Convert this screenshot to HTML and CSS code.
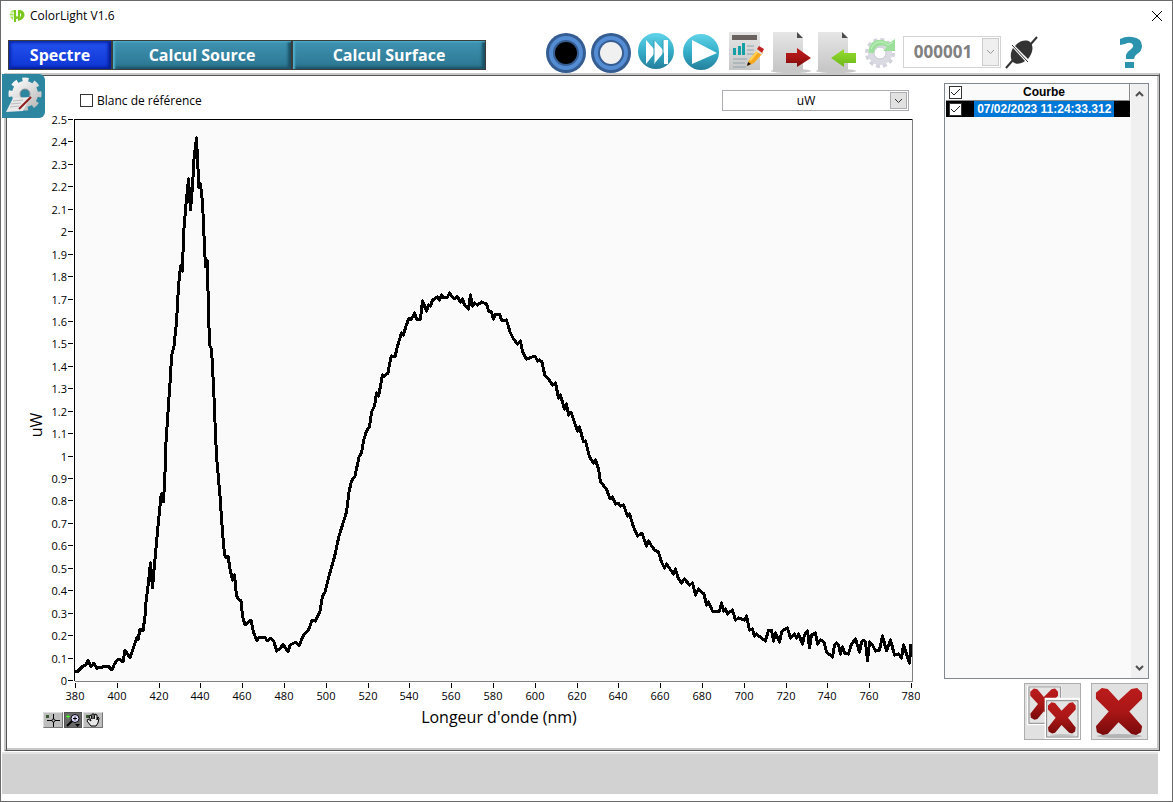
FILE: index.html
```html
<!DOCTYPE html>
<html lang="fr">
<head>
    <meta charset="UTF-8">
    <meta name="viewport" content="width=device-width, initial-scale=1.0">
    <title>ColorLight V1.6</title>
    <link rel="stylesheet" href="styles.css">
</head>
<body>
    <!-- shared gradients -->
    <svg class="defs" width="0" height="0" aria-hidden="true">
        <defs>
            <linearGradient id="teal" x1="0" y1="0" x2="0" y2="1"><stop offset="0" stop-color="#5fd3e8"/><stop offset="0.5" stop-color="#36aec9"/><stop offset="1" stop-color="#237f9b"/></linearGradient>
            <linearGradient id="sheet" x1="0" y1="0" x2="0" y2="1"><stop offset="0" stop-color="#e6e6e6"/><stop offset="1" stop-color="#c6c6c6"/></linearGradient>
            <linearGradient id="red" x1="0" y1="0" x2="0" y2="1"><stop offset="0" stop-color="#bb1c1c"/><stop offset="0.5" stop-color="#aa1616"/><stop offset="1" stop-color="#780a0a"/></linearGradient>
            <linearGradient id="green" x1="0" y1="0" x2="0" y2="1"><stop offset="0" stop-color="#96dc2c"/><stop offset="1" stop-color="#6cb81c"/></linearGradient>
            <linearGradient id="steel" gradientUnits="userSpaceOnUse" x1="12" y1="4" x2="36" y2="36"><stop offset="0" stop-color="#ffffff"/><stop offset="1" stop-color="#b4b4b4"/></linearGradient>
            <path id="cross" d="M4 9 10 4 16 5 27 17 40 5 46 4 51 9 51 15 38 28 51 43 50 49 45 52 40 51 27 39 16 51 11 52 5 49 4 43 17 28 4 15Z"/>
        </defs>
    </svg>

    <div class="window">
        <header class="titlebar">
            <svg class="logo" width="16" height="16" viewBox="0 0 16 16">
                <path d="M5 2C0 3-1 8 4 12Z" fill="#a5e15c"/>
                <path d="M10 2C17 2 18 11 9 13V10C13 9 13 5 10 5Z" fill="#7ac81e"/>
                <path d="M5 2H7V8Q8 9 9 8V2H11V9Q10 11 7 11V14H5Z" fill="#7ac81e"/>
                <path d="M1 5H5M0 8H4" stroke="#fff"/>
            </svg>
            <h1>ColorLight V1.6</h1>
            <button class="close" type="button" aria-label="Fermer">
                <svg width="12" height="12" viewBox="0 0 12 12"><path d="M1 1 11 11M11 1 1 11" stroke="#000" fill="none"/></svg>
            </button>
        </header>

        <div class="toolbar">
            <nav class="tabs">
                <button class="tab tab-spectre active" type="button">Spectre</button>
                <button class="tab tab-source" type="button">Calcul Source</button>
                <button class="tab tab-surface" type="button">Calcul Surface</button>
            </nav>

            <div class="tools">
                <button class="tool" type="button" aria-label="Noir">
                    <svg viewBox="0 0 41 41"><circle cx="20" cy="21" r="20" fill="#355d91"/><circle cx="20" cy="21" r="15" fill="none" stroke="#548dd4" stroke-width="4"/><circle cx="20" cy="21" r="11" fill="#000"/></svg>
                </button>
                <button class="tool" type="button" aria-label="Blanc">
                    <svg viewBox="0 0 41 41"><circle cx="20" cy="21" r="20" fill="#355d91"/><circle cx="20" cy="21" r="15" fill="none" stroke="#548dd4" stroke-width="4"/><circle cx="20" cy="21" r="11" fill="#f0f0f0"/></svg>
                </button>
                <button class="tool" type="button" aria-label="Mesure continue">
                    <svg viewBox="0 0 41 41"><circle cx="20" cy="19" r="18" fill="url(#teal)"/><path d="M10 8 18 17V8L27 18V8H32V32H28V20L18 32V22L10 32Z" fill="#fff"/><path d="M18 8V31M27 8V31" stroke="#2c9ab5"/></svg>
                </button>
                <button class="tool" type="button" aria-label="Mesure">
                    <svg viewBox="0 0 41 41"><circle cx="20" cy="20" r="18" fill="url(#teal)"/><path d="M11 8 36 21 11 32Z" fill="#fff"/></svg>
                </button>
                <button class="tool" type="button" aria-label="Rapport">
                    <svg viewBox="0 0 41 41">
                        <rect x="3" y="0" width="31" height="38" fill="url(#sheet)"/>
                        <rect x="6" y="3" width="25" height="5" fill="#6a625e"/>
                        <path d="M7 16h3v7H7zM12 14h3v9h-3zM16 11h3v12h-3z" fill="#14a0a5"/>
                        <path d="M21 14h7M21 18h7M21 22h7M7 27h14M7 31h12M7 35h13" stroke="#8fa2ac"/>
                        <path d="M21 34 23 28 32 17 37 21 28 31Z" fill="#f5a81c"/>
                        <path d="M23 28 32 17 34 18 25 29Z" fill="#ffd15a"/>
                        <path d="M31 17 33 14 38 17 36 21Z" fill="#c22424"/>
                        <path d="M30 18 36 22" stroke="#ddd" stroke-width="2"/>
                        <path d="M21 34 22 30 25 32Z" fill="#111"/>
                    </svg>
                </button>
                <button class="tool" type="button" aria-label="Exporter">
                    <svg viewBox="0 0 41 41">
                        <ellipse cx="20" cy="39" rx="20" ry="2" fill="#c8c8c8"/>
                        <path d="M2 0H26L32 6V38H2Z" fill="url(#sheet)"/><path d="M26 0H32V6Z" fill="#fff"/><path d="M26 0 32 6H26Z" fill="#4c4c4c"/>
                        <path d="M15 21H26V16L40 26 26 35V31H15Z" fill="url(#red)"/>
                    </svg>
                </button>
                <button class="tool" type="button" aria-label="Importer">
                    <svg viewBox="0 0 41 41">
                        <ellipse cx="20" cy="39" rx="20" ry="2" fill="#c8c8c8"/>
                        <path d="M2 0H26L32 6V38H2Z" fill="url(#sheet)"/><path d="M26 0H32V6Z" fill="#fff"/><path d="M26 0 32 6H26Z" fill="#4c4c4c"/>
                        <path d="M40 21H28V17L15 26 28 35V31H40Z" fill="url(#green)"/>
                    </svg>
                </button>
                <button class="tool" type="button" aria-label="Actualiser">
                    <svg viewBox="0 0 41 41">
                        <circle cx="19" cy="21" r="13" fill="none" stroke="#d2d2dc" stroke-width="4" stroke-dasharray="3.8 3"/>
                        <circle cx="19" cy="21" r="9" fill="none" stroke="#dadae2" stroke-width="6"/>
                        <circle cx="19" cy="21" r="6" fill="#fff" stroke="#c5c5d0"/>
                        <path d="M8 21C6 11 17 3 28 11L34 7V19H22L26 15C19 11 13 15 13 21Z" fill="#9de09b"/>
                        <path d="M10 17C13 9 21 8 27 13L32 10" stroke="#c9f2c8" fill="none"/>
                    </svg>
                </button>
            </div>

            <div class="dropdown serial">
                <select aria-label="Numéro de série" disabled><option>000001</option></select>
                <span class="arrow"><svg width="9" height="6" viewBox="0 0 9 6"><path d="M1 1 4.5 4.5 8 1" fill="none" stroke="currentColor"/></svg></span>
            </div>

            <button class="tool plug" type="button" aria-label="Connexion">
                <svg viewBox="0 0 34 41">
                    <path d="M1 36 8 28M25 13 32 5" stroke="#333" stroke-width="2"/>
                    <path d="M8 16 20 29C16 32 11 33 8 30 5 27 5 21 8 16Z" fill="#333"/>
                    <path d="M10 14C14 9 21 7 25 10 29 14 28 21 23 27Z" fill="#333"/>
                    <path d="M7 13 23 30" stroke="#333"/>
                </svg>
            </button>

            <button class="tool help" type="button" aria-label="Aide">
                <svg viewBox="0 0 24 41"><path d="M1 7Q7 4 13 5 23 6 23 14 23 19 18 22 15 24 15 27H7Q6 21 11 18 15 15 14 13 12 9 6 12L1 13Z" fill="#2c93ae"/><rect x="6" y="30" width="9" height="6" fill="#2c93ae"/></svg>
            </button>
        </div>

        <main class="panel">
            <button class="settings" type="button" aria-label="Réglages">
                <svg width="43" height="44" viewBox="0 0 43 44">
                    <circle cx="23" cy="20" r="14" fill="none" stroke="url(#steel)" stroke-width="5" stroke-dasharray="6 5" stroke-dashoffset="3"/>
                    <circle cx="23" cy="20" r="9" fill="none" stroke="url(#steel)" stroke-width="8"/>
                    <circle cx="23" cy="20" r="5" fill="#2c86a0" stroke="#999"/>
                    <path d="M11 24 28 23 21 37 4 38 7 32Z" fill="#e9e9ea"/>
                    <path d="M11 27 21 26M9 30 19 29M8 33 17 32" stroke="#bbb"/>
                    <path d="M17 35 29 23" stroke="#8c1a1a" stroke-width="2"/>
                </svg>
            </button>

            <section class="spectrum">
                <div class="options">
                    <label class="check"><input type="checkbox"> Blanc de référence</label>
                    <div class="dropdown unit">
                        <select aria-label="Unité"><option>uW</option></select>
                        <span class="arrow"><svg width="9" height="6" viewBox="0 0 9 6"><path d="M1 1 4.5 4.5 8 1" fill="none" stroke="currentColor"/></svg></span>
                    </div>
                </div>

                <svg class="chart" viewBox="20 112 900 594" role="img" aria-label="Spectre en uW">
                    <rect x="75" y="120" width="837" height="562" fill="#fafafa"/>
                    <g class="axis">
                        <path d="M912.5 120V682.5H75" stroke="#808080"/>
                        <path d="M74.5 682V120.5H912" stroke="#000"/>
                        <path d="M68 120.5h5M68 142.5h5M68 165.5h5M68 187.5h5M68 210.5h5M68 232.5h5M68 255.5h5M68 277.5h5M68 300.5h5M68 322.5h5M68 344.5h5M68 367.5h5M68 389.5h5M68 412.5h5M68 434.5h5M68 457.5h5M68 479.5h5M68 501.5h5M68 524.5h5M68 546.5h5M68 569.5h5M68 591.5h5M68 614.5h5M68 636.5h5M68 659.5h5M68 681.5h5" stroke="#000"/>
                        <path d="M75.5 684v5M117.5 684v5M159.5 684v5M200.5 684v5M242.5 684v5M284.5 684v5M326.5 684v5M368.5 684v5M409.5 684v5M451.5 684v5M493.5 684v5M535.5 684v5M577.5 684v5M618.5 684v5M660.5 684v5M702.5 684v5M744.5 684v5M786.5 684v5M827.5 684v5M869.5 684v5M911.5 684v5" stroke="#000"/>
                    </g>
                    <g class="labels-y">
                        <text x="67" y="125">2.5</text>
                        <text x="67" y="147">2.4</text>
                        <text x="67" y="170">2.3</text>
                        <text x="67" y="192">2.2</text>
                        <text x="67" y="215">2.1</text>
                        <text x="67" y="237">2</text>
                        <text x="67" y="260">1.9</text>
                        <text x="67" y="282">1.8</text>
                        <text x="67" y="305">1.7</text>
                        <text x="67" y="327">1.6</text>
                        <text x="67" y="349">1.5</text>
                        <text x="67" y="372">1.4</text>
                        <text x="67" y="394">1.3</text>
                        <text x="67" y="417">1.2</text>
                        <text x="67" y="439">1.1</text>
                        <text x="67" y="462">1</text>
                        <text x="67" y="484">0.9</text>
                        <text x="67" y="506">0.8</text>
                        <text x="67" y="529">0.7</text>
                        <text x="67" y="551">0.6</text>
                        <text x="67" y="574">0.5</text>
                        <text x="67" y="596">0.4</text>
                        <text x="67" y="619">0.3</text>
                        <text x="67" y="641">0.2</text>
                        <text x="67" y="664">0.1</text>
                        <text x="67" y="686">0</text>
                    </g>
                    <g class="labels-x">
                        <text x="75" y="701">380</text>
                        <text x="117" y="701">400</text>
                        <text x="159" y="701">420</text>
                        <text x="200" y="701">440</text>
                        <text x="242" y="701">460</text>
                        <text x="284" y="701">480</text>
                        <text x="326" y="701">500</text>
                        <text x="368" y="701">520</text>
                        <text x="409" y="701">540</text>
                        <text x="451" y="701">560</text>
                        <text x="493" y="701">580</text>
                        <text x="535" y="701">600</text>
                        <text x="577" y="701">620</text>
                        <text x="618" y="701">640</text>
                        <text x="660" y="701">660</text>
                        <text x="702" y="701">680</text>
                        <text x="744" y="701">700</text>
                        <text x="786" y="701">720</text>
                        <text x="827" y="701">740</text>
                        <text x="869" y="701">760</text>
                        <text x="911" y="701">780</text>
                    </g>
                    <text class="axis-title" transform="translate(42 426) rotate(-90)">uW</text>
                    <polyline class="curve" points="75,672 77,673 83,667 86,666 88,661 91,668 94,664 97,670 98,668 101,669 104,667 108,667 112,671 114,666 117,661 119,660 123,663 125,651 130,659 133,650 137,638 138,641 140,630 143,632 145,617 146,603 148,587 150.5,564 152.5,589 155,560 158,527 161,497 162,494 163.5,503 165,473 166,443 168,413 170.5,377 171.5,357 174,347 176.5,323 178.5,287 180.5,267 182.5,272 183.5,235 185,217 186.5,200 188.5,180 190.5,211 192.5,187 194,160 196.5,139 197.5,160 199,189 200.5,185 202.5,203 204,237 205.5,268 207.5,262 208.5,320 210,347 211.5,350 213.5,387 214.5,409 215.5,437 217,463 220,497 222.5,533 224.5,556 226,559 228,557 230,570 232.5,581 234.5,576 236.5,597 238.5,600 241,602 242.5,617 245,626 251,621 253.5,633 257,642 259,638 263,639 265,638 267,642 271,639 274,643 276.5,652 280.5,649 283,645 288,653 290,646 296,643 299,647 303,637 309,630 312,621 315.5,622 320,612 322.5,597 325,593 329,577 334.5,558 339,537 346.5,513 349,493 351.5,482 355,477 359,458 361.5,454 363.5,442 366.5,432 369.5,428 371.5,413 374.5,407 376.5,394 378.5,397 380.5,387 382.5,376 384.5,377 388,374 390.5,360 391.5,357 395,358 397.5,347 401.5,334 403.5,336 406,327 409,319 411,321 414.5,314 416.5,320 420.5,320 422.5,302 426.5,312 428.5,306 430.5,307 432.5,301 437.5,298 439.5,301 441.5,296 443.5,299 447.5,298 449.5,294 451.5,297 455,300 457,297 460.5,303 462.5,300 464.5,306 468.5,310 470.5,296 472.5,307 474.5,304 477.5,306 481.5,303 486.5,305 489,313 491,312 493.5,320 495.5,315 499.5,315 502,322 506.5,321 510,333 513.5,340 517.5,345 520.5,342 522.5,353 526.5,360 529.5,359 535,357 537.5,362 539.5,361 542,363 545,377 548,379 552.5,386 555.5,384 558.5,399 560.5,396 564.5,410 566.5,405 568.5,416 571,413 577.5,432 579.5,428 583.5,443 585.5,442 589.5,458 593.5,464 595.5,461 598.5,470 600.5,483 606.5,490 610,500 612.5,498 615.5,505 618,504 620.5,507 623.5,506 627.5,517 629.5,515 633.5,528 637.5,537 642,534 646.5,547 648.5,542 651,546 654.5,551 658.5,553 661.5,563 664.5,569 666.5,565 673.5,575 675.5,570 678.5,580 681.5,584 684.5,580 689.5,586 692.5,584 695.5,596 698.5,590 704,595 706.5,606 708.5,603 712.5,612 719.5,612 721.5,604 723.5,612 725.5,610 727.5,615 732.5,611 735.5,621 738.5,619 744.5,621 746.5,617 749.5,631 752.5,630 754.5,637 756.5,635 760,638 765.5,642 768.5,631 771.5,631 773.5,642 775.5,634 779.5,643 782,632 787.5,629 790.5,639 794.5,635 796.5,639 798.5,635 802.5,645 804.5,636 807.5,632 809.5,649 811.5,636 815.5,634 817.5,645 820.5,641 824,643 826.5,653 832.5,658 834.5,646 836.5,644 838.5,646 840.5,655 842.5,648 844.5,654 848.5,655 851.5,645 855.5,640 859.5,653 861.5,643 864,641 865.5,643 867.5,662 869.5,643 872.5,646 875.5,652 879.5,651 882.5,637 886.5,652 890.5,641 894.5,656 898.5,655 901.5,659 903.5,646 909.5,664 911,645"/>
                </svg>

                <div class="chart-footer">
                    <div class="palette">
                        <button type="button" aria-label="Curseur"><svg width="18" height="14" viewBox="1 1 18 14"><rect x="3" y="3" width="3" height="3" fill="#3c5a32"/><path d="M4 8.5H9M12 8.5H17M10.500 2V7M10.500 10V15" stroke="#000"/><circle cx="10.500" cy="8.500" r="1.500" fill="none" stroke="#000"/></svg></button>
                        <button class="pressed" type="button" aria-label="Zoom"><svg width="16" height="14" viewBox="1 1 16 14"><path d="M2 4.500H6M4 2.500V6.500" stroke="#4cff2c"/><circle cx="11" cy="6.500" r="4" fill="#dcdcff" stroke="#000"/><path d="M9 6.500H13M11 4.500V8.500" stroke="#000"/><path d="M8 9 3 14" stroke="#000" stroke-width="2"/><path d="M11 12H16L13.500 15Z" fill="#000"/></svg></button>
                        <button type="button" aria-label="Déplacer"><svg width="18" height="14" viewBox="1 1 18 14"><rect x="3" y="3" width="3" height="3" fill="#3c5a32"/><path d="M8 14 4 9 5 7 8 9 6 4 8 3 9 7V2H11L11 7 12 2 14 3V8L15 5 16 6 15 11 13 14Z" fill="#e8e8e8" stroke="#000"/></svg></button>
                    </div>
                    <p class="x-title">Longeur d'onde (nm)</p>
                </div>
            </section>

            <aside class="side">
                <div class="list">
                    <table>
                        <thead>
                            <tr><th class="pick"><input type="checkbox" aria-label="Tout sélectionner" checked></th><th>Courbe</th></tr>
                        </thead>
                        <tbody>
                            <tr class="selected"><td class="pick"><input type="checkbox" aria-label="Courbe 1" checked></td><td><span class="name">07/02/2023 11:24:33.312</span></td></tr>
                        </tbody>
                    </table>
                    <div class="scrollbar">
                        <svg width="9" height="6" viewBox="0 0 9 6"><path d="M1 5 4.5 1.5 8 5" fill="none" stroke="#505050" stroke-width="2"/></svg>
                        <svg width="9" height="6" viewBox="0 0 9 6"><path d="M1 1 4.5 4.5 8 1" fill="none" stroke="#505050" stroke-width="2"/></svg>
                    </div>
                </div>
                <div class="actions">
                    <button type="button" aria-label="Tout supprimer">
                        <svg width="55" height="55" viewBox="0 0 56 56">
                            <rect x="3" y="3" width="33" height="38" fill="#e4e4e4" stroke="#fff" stroke-width="2"/><rect x="4" y="3" width="32" height="37" fill="none" stroke="#888"/>
                            <use href="#cross" transform="translate(3 2) scale(.6 .66)" fill="url(#red)"/>
                            <rect x="21" y="15" width="34" height="40" fill="#e4e4e4" stroke="#fff" stroke-width="2"/><rect x="22" y="17" width="32" height="37" fill="none" stroke="#888"/>
                            <ellipse cx="38" cy="52" rx="13" ry="1" fill="#c0c0c0"/>
                            <use href="#cross" transform="translate(21 16) scale(.6 .66)" fill="url(#red)"/>
                        </svg>
                    </button>
                    <button type="button" aria-label="Supprimer">
                        <svg width="55" height="55" viewBox="0 0 56 56"><ellipse cx="28" cy="53" rx="23" ry="2" fill="#b4b4b4"/><use href="#cross" fill="url(#red)"/></svg>
                    </button>
                </div>
            </aside>
        </main>

        <footer class="status"></footer>
    </div>
</body>
</html>
```

FILE: styles.css
```css
* {
    box-sizing: border-box;
    margin: 0;
    padding: 0;
}

body {
    font-family: "Open Sans", "Noto Sans", sans-serif;
    font-size: 12px;
    line-height: 16px;
    color: #000;
    background: #fff;
}

button,
select,
input {
    font: inherit;
    color: inherit;
}

button {
    border: none;
    background: none;
    cursor: pointer;
}

svg {
    display: block;
}

.defs {
    position: absolute;
}

.window {
    display: flex;
    flex-direction: column;
    min-height: 100vh;
    border: 1px solid #6a6a6a;
    background: #fff;
}

/* Title bar */
.titlebar {
    display: flex;
    align-items: center;
    gap: 5px;
    height: 30px;
    padding: 0 9px 0 8px;
}

.titlebar h1 {
    font-size: 12px;
    font-weight: 400;
}

.close {
    margin-left: auto;
}

/* Toolbar */
.toolbar {
    display: flex;
    align-items: center;
    height: 42px;
    padding: 0 29px 0 7px;
}

.tabs {
    display: flex;
    margin-top: 6px;
}

.tab {
    height: 30px;
    border: 1px solid #3c3c3c;
    font-size: 16px;
    font-weight: 700;
    line-height: 28px;
    color: #fff;
    background: linear-gradient(#3f93b2, #2a7590);
    box-shadow: inset 2px 1px 2px #4fb0cc, inset -3px -2px 3px #1a4f63;
}

.tab.active {
    background: linear-gradient(#2452ee, #0d35d4);
    box-shadow: inset 2px 2px 3px #0a28b0, inset -3px -2px 3px #061e96;
}

.tab-spectre {
    width: 104px;
}

.tab-source {
    width: 180px;
}

.tab-surface {
    width: 194px;
}

.tools {
    display: flex;
    gap: 4px;
    margin-left: 60px;
}

.tool {
    width: 41px;
    height: 41px;
    flex: none;
}

.tool svg {
    width: 100%;
    height: 100%;
}

.tool.plug {
    width: 34px;
    margin-left: 4px;
}

.tool.help {
    width: 24px;
    margin-left: auto;
}

/* Drop-downs */
.dropdown {
    position: relative;
}

.dropdown select {
    width: 100%;
    height: 100%;
    appearance: none;
    border: 1px solid #ababb0;
    background: #fff;
    text-align: center;
    text-align-last: center;
    opacity: 1;
}

.arrow {
    position: absolute;
    top: 2px;
    right: 2px;
    bottom: 2px;
    display: flex;
    align-items: center;
    justify-content: center;
    width: 17px;
    border: 1px solid #ababb0;
    background: #e1e1e1;
    color: #333;
    pointer-events: none;
}

.serial {
    width: 98px;
    height: 32px;
    margin-left: 1px;
}

.serial select {
    padding-right: 18px;
    border-color: #d4d4d4;
    font-size: 17px;
    font-weight: 700;
    color: #808080;
}

.serial .arrow {
    border-color: #ccc;
    background: #efefef;
    color: #999;
}

.unit {
    width: 187px;
    height: 21px;
}

.unit select {
    padding-right: 19px;
}

/* Main panel */
.panel {
    position: relative;
    display: flex;
    flex: 1;
    gap: 24px;
    margin: 0 12px 0 3px;
    padding: 8px 10px 10px 14px;
    border: solid;
    border-width: 2px 1px 1px 2px;
    border-color: #c8c8c8 #555 #555 #c8c8c8;
    box-shadow: inset 1px 1px #555, inset -2px -2px #c8c8c8;
}

.settings {
    position: absolute;
    top: -1px;
    left: -4px;
    border-radius: 0 6px 6px 0;
    background: #2c86a0;
}

.spectrum {
    flex: 1;
    min-width: 0;
}

.options {
    display: flex;
    align-items: center;
    justify-content: space-between;
    padding: 7px 11px 0 60px;
}

.check {
    display: flex;
    align-items: center;
    gap: 4px;
}

input[type="checkbox"] {
    width: 13px;
    height: 13px;
    appearance: none;
    border: 1px solid #333;
    background: #fff;
}

input[type="checkbox"]:checked {
    background: #fff url("data:image/svg+xml,%3Csvg xmlns='http://www.w3.org/2000/svg' viewBox='0 0 11 11'%3E%3Cpath d='M1 5 4 8 10 2' fill='none' stroke='%23222'/%3E%3C/svg%3E") center / 11px no-repeat;
}

.chart {
    width: 100%;
    height: auto;
}

.axis {
    fill: none;
    shape-rendering: crispEdges;
}

.labels-x,
.labels-y {
    font-size: 11px;
}

.labels-x {
    text-anchor: middle;
}

.labels-y {
    text-anchor: end;
}

.axis-title {
    font-size: 16px;
    text-anchor: middle;
}

.curve {
    fill: none;
    stroke: #000;
    stroke-width: 3;
    stroke-linejoin: round;
    shape-rendering: crispEdges;
}

.chart-footer {
    display: flex;
    align-items: center;
    padding: 0 25px 0 23px;
}

.palette {
    display: flex;
    gap: 1px;
    padding-top: 6px;
}

.palette button {
    border: 1px solid;
    border-color: #ddd #777 #777 #ddd;
    background: #bebebe;
}

.palette button.pressed {
    background: #686868;
    border-color: #555;
}

.x-title {
    flex: 1;
    font-size: 16px;
    line-height: 24px;
    text-align: center;
}

/* Curve list */
.side {
    display: flex;
    flex-direction: column;
    width: 205px;
}

.list {
    display: flex;
    flex: 1;
    border: 1px solid #828790;
    background: #fafafa;
}

.list table {
    flex: 1;
    align-self: flex-start;
    margin: 0 1px;
    border-collapse: collapse;
    font-family: "Liberation Sans", Arial, sans-serif;
    font-size: 12px;
    font-weight: 700;
}

.list th,
.list td {
    height: 16px;
    padding-right: 10px;
    text-align: center;
    white-space: nowrap;
}

.list .pick {
    width: 23px;
    padding: 0 0 0 3px;
    text-align: left;
}

.list .pick input {
    display: block;
}

.list thead {
    border-right: 1px solid #888;
    border-bottom: 1px solid #888;
}

.selected {
    background: #000;
    color: #fff;
}

.name {
    display: inline-block;
    padding: 0 3px;
    background: #0078d7;
}

.scrollbar {
    display: flex;
    flex-direction: column;
    align-items: center;
    justify-content: space-between;
    width: 17px;
    padding: 7px 0;
    background: #f0f0f0;
}

.actions {
    display: flex;
    justify-content: flex-end;
    gap: 10px;
    padding: 4px 1px 0 0;
}

.actions button {
    border: 1px solid #adadad;
    background: #e1e1e1;
}

/* Status bar */
.status {
    height: 42px;
    margin: 1px 14px 7px 1px;
    border-top: 2px solid #e4e4e4;
    background: #d2d2d2;
}
```
